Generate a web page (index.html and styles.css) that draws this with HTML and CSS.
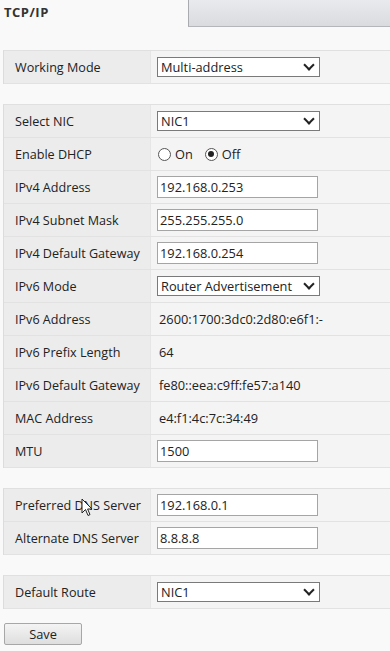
FILE: index.html
```html
<!DOCTYPE html>
<html lang="en">
<head>
  <meta charset="UTF-8">
  <meta name="viewport" content="width=device-width, initial-scale=1.0">
  <title>TCP/IP</title>
  <link rel="stylesheet" href="styles.css">
</head>
<body>
  <div class="tabs">
    <div class="tab-title">TCP/IP</div>
    <div class="tab-other"></div>
  </div>

  <div class="group">
    <div class="row">
      <div class="label">Working Mode</div>
      <div class="value"><div class="select">Multi-address<span class="chev"></span></div></div>
    </div>
  </div>

  <div class="group">
    <div class="row">
      <div class="label">Select NIC</div>
      <div class="value"><div class="select">NIC1<span class="chev"></span></div></div>
    </div>
    <div class="row">
      <div class="label">Enable DHCP</div>
      <div class="value radios">
        <span class="radio"></span><span class="radio-text">On</span>
        <span class="radio checked"></span><span class="radio-text">Off</span>
      </div>
    </div>
    <div class="row">
      <div class="label">IPv4 Address</div>
      <div class="value"><div class="input">192.168.0.253</div></div>
    </div>
    <div class="row">
      <div class="label">IPv4 Subnet Mask</div>
      <div class="value"><div class="input">255.255.255.0</div></div>
    </div>
    <div class="row">
      <div class="label">IPv4 Default Gateway</div>
      <div class="value"><div class="input">192.168.0.254</div></div>
    </div>
    <div class="row">
      <div class="label">IPv6 Mode</div>
      <div class="value"><div class="select">Router Advertisement<span class="chev"></span></div></div>
    </div>
    <div class="row">
      <div class="label">IPv6 Address</div>
      <div class="value"><span class="text">2600:1700:3dc0:2d80:e6f1:-</span></div>
    </div>
    <div class="row">
      <div class="label">IPv6 Prefix Length</div>
      <div class="value"><span class="text">64</span></div>
    </div>
    <div class="row">
      <div class="label">IPv6 Default Gateway</div>
      <div class="value"><span class="text">fe80::eea:c9ff:fe57:a140</span></div>
    </div>
    <div class="row">
      <div class="label">MAC Address</div>
      <div class="value"><span class="text">e4:f1:4c:7c:34:49</span></div>
    </div>
    <div class="row">
      <div class="label">MTU</div>
      <div class="value"><div class="input">1500</div></div>
    </div>
  </div>

  <div class="group">
    <div class="row">
      <div class="label cursor-holder">Preferred DNS Server
        <svg class="cursor" width="12" height="19" viewBox="0 0 12 19">
          <path d="M1 1 L1 15 L4.5 11.5 L7 17.5 L9 16.6 L6.6 11 L11 11 Z" fill="#fff" stroke="#222" stroke-width="1"/>
        </svg>
      </div>
      <div class="value"><div class="input">192.168.0.1</div></div>
    </div>
    <div class="row">
      <div class="label">Alternate DNS Server</div>
      <div class="value"><div class="input">8.8.8.8</div></div>
    </div>
  </div>

  <div class="group">
    <div class="row">
      <div class="label">Default Route</div>
      <div class="value"><div class="select">NIC1<span class="chev"></span></div></div>
    </div>
  </div>

  <button class="save">Save</button>
</body>
</html>
```

FILE: styles.css
```css
body {
  margin: 0;
  background-color: #f9f9f9;
  font-family: "Open Sans", "Liberation Sans", Arial, sans-serif;
  font-size: 12.6px;
  color: #222;
}

.tabs {
  display: flex;
  height: 28px;
}

.tab-title {
  width: 184px;
  padding-left: 4px;
  padding-top: 3px;
  font-weight: bold;
  font-size: 13px;
  letter-spacing: 0.5px;
  color: #333;
}

.tab-other {
  flex: 1;
  height: 26px;
  border-left: 1px solid #a9abb0;
  border-bottom: 1px solid #b4b6ba;
  background: linear-gradient(#e9eaed, #d9dbde);
}

.group {
  margin-left: 3px;
  margin-top: 22px;
  border-top: 1px solid #e0e0e0;
  border-left: 1px solid #dcdcdc;
}

.group + .group {
  margin-top: 20px;
}

.row {
  display: flex;
  height: 32px;
  border-bottom: 1px solid #e2e2e2;
}

.label {
  width: 135px;
  padding-left: 11px;
  background-color: #ececec;
  display: flex;
  align-items: center;
  border-right: 1px solid #e6e6e6;
}

.value {
  flex: 1;
  background-color: #f4f4f4;
  display: flex;
  align-items: center;
  padding-left: 6px;
}

.select {
  position: relative;
  width: 158px;
  height: 18px;
  line-height: 18px;
  padding-left: 3px;
  background: #fff;
  border: 1px solid #7a7a7a;
  font-size: 12.8px;
}

.chev {
  position: absolute;
  right: 6px;
  top: 3px;
  width: 6px;
  height: 6px;
  border-right: 2px solid #222;
  border-bottom: 2px solid #222;
  transform: rotate(45deg);
}

.input {
  width: 157px;
  height: 20px;
  line-height: 20px;
  padding-left: 2px;
  background: #fff;
  border: 1px solid #a5a5a5;
  font-size: 12.8px;
}

.text {
  padding-left: 2px;
  font-size: 12.8px;
}

.radios {
  padding-left: 7px;
}

.radio {
  width: 11px;
  height: 11px;
  border: 1px solid #555;
  border-radius: 50%;
  background: #fff;
  position: relative;
}

.radio.checked::after {
  content: "";
  position: absolute;
  left: 2.5px;
  top: 2.5px;
  width: 6px;
  height: 6px;
  border-radius: 50%;
  background: #222;
}

.radio-text {
  margin-left: 4px;
  margin-right: 12px;
  font-size: 12.8px;
}

.cursor-holder {
  position: relative;
}

.cursor {
  position: absolute;
  left: 77px;
  top: 9px;
}

.save {
  display: block;
  margin: 14px 0 0 4px;
  width: 78px;
  height: 22px;
  border: 1px solid #a7a7a7;
  border-radius: 2px;
  background: linear-gradient(#f4f4f4, #dedede);
  font-family: "Open Sans", "Liberation Sans", Arial, sans-serif;
  font-size: 12.8px;
  color: #222;
}
```
